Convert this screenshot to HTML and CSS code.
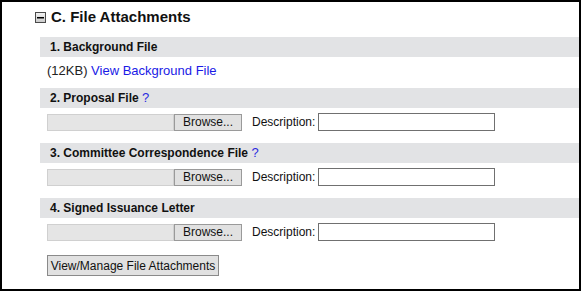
FILE: index.html
```html
<!DOCTYPE html>
<html lang="en">
<head>
  <meta charset="UTF-8">
  <title>File Attachments</title>
  <link rel="stylesheet" href="styles.css">
</head>
<body>
  <div class="panel">
    <h3 class="section-title">
      <svg class="toggle" width="11" height="11" viewBox="0 0 11 11">
        <defs>
          <linearGradient id="tg" x1="0" y1="0" x2="0" y2="1">
            <stop offset="0" stop-color="#f4f4f4"/>
            <stop offset="1" stop-color="#c9c9c9"/>
          </linearGradient>
        </defs>
        <rect x="0.5" y="0.5" width="10" height="10" fill="url(#tg)" stroke="#4a4a4a"/>
        <rect x="2" y="5" width="7" height="1.5" fill="#000"/>
      </svg>
      C. File Attachments
    </h3>

    <div class="group">
      <div class="group-head">1. Background File</div>
      <div class="group-body link-row"><span class="size">(12KB)</span>&nbsp;<a href="#">View Background File</a></div>
    </div>

    <div class="group">
      <div class="group-head">2. Proposal File <a href="#" class="help">?</a></div>
      <div class="group-body">
        <span class="filebox"></span><span class="browse">Browse...</span>
        <label class="desc">Description:</label><input type="text" class="desc-input">
      </div>
    </div>

    <div class="group">
      <div class="group-head">3. Committee Correspondence File <a href="#" class="help">?</a></div>
      <div class="group-body">
        <span class="filebox"></span><span class="browse">Browse...</span>
        <label class="desc">Description:</label><input type="text" class="desc-input">
      </div>
    </div>

    <div class="group">
      <div class="group-head">4. Signed Issuance Letter</div>
      <div class="group-body">
        <span class="filebox"></span><span class="browse">Browse...</span>
        <label class="desc">Description:</label><input type="text" class="desc-input">
      </div>
    </div>

    <div class="actions">
      <button class="manage">View/Manage File Attachments</button>
    </div>
  </div>
</body>
</html>
```

FILE: styles.css
```css
html, body {
  margin: 0;
  padding: 0;
}
body {
  font-family: "Liberation Sans", Arial, sans-serif;
  font-size: 12px;
  color: #000;
  background: #fff;
}
.panel {
  box-sizing: border-box;
  width: 581px;
  height: 291px;
  border: 2px solid #000;
  padding-top: 6px;
}
.section-title {
  display: flex;
  align-items: center;
  gap: 5px;
  margin: 0 0 11px 33px;
  font-size: 15px;
  line-height: 18px;
  color: #111;
}
.toggle {
  display: block;
}
.group {
  margin-left: 38px;
}
.group-head {
  height: 20px;
  line-height: 20px;
  padding-left: 10px;
  background: #e2e3e5;
  font-weight: bold;
  color: #111;
}
.help {
  color: #2a2ae0;
  text-decoration: none;
  font-weight: normal;
  font-size: 13px;
}
.group-body {
  display: flex;
  align-items: center;
  height: 18px;
  margin: 5px 0 12px;
  padding-left: 7px;
}
.link-row {
  margin: 4px 0 9px;
  font-size: 13px;
  color: #222;
}
.link-row a {
  color: #1a1ae6;
  text-decoration: none;
}
.filebox {
  box-sizing: border-box;
  width: 127px;
  height: 17px;
  background: #e5e5e5;
  border: 1px solid #d0d0d0;
}
.browse {
  box-sizing: border-box;
  width: 68px;
  height: 17px;
  line-height: 15px;
  text-align: center;
  background: #e1e1e1;
  border: 1px solid #9a9a9a;
  color: #111;
}
.desc {
  margin-left: 10px;
  color: #111;
}
.desc-input {
  box-sizing: border-box;
  width: 177px;
  height: 18px;
  margin: 0 0 0 3px;
  padding: 0 3px;
  border: 1px solid #707070;
  background: #fff;
}
.actions {
  margin: 14px 0 0 45px;
}
.manage {
  box-sizing: border-box;
  width: 172px;
  height: 21px;
  padding: 0;
  font-family: "Liberation Sans", Arial, sans-serif;
  font-size: 12px;
  color: #111;
  background: #e1e1e1;
  border: 1px solid #8a8a8a;
  border-radius: 0;
}
```
